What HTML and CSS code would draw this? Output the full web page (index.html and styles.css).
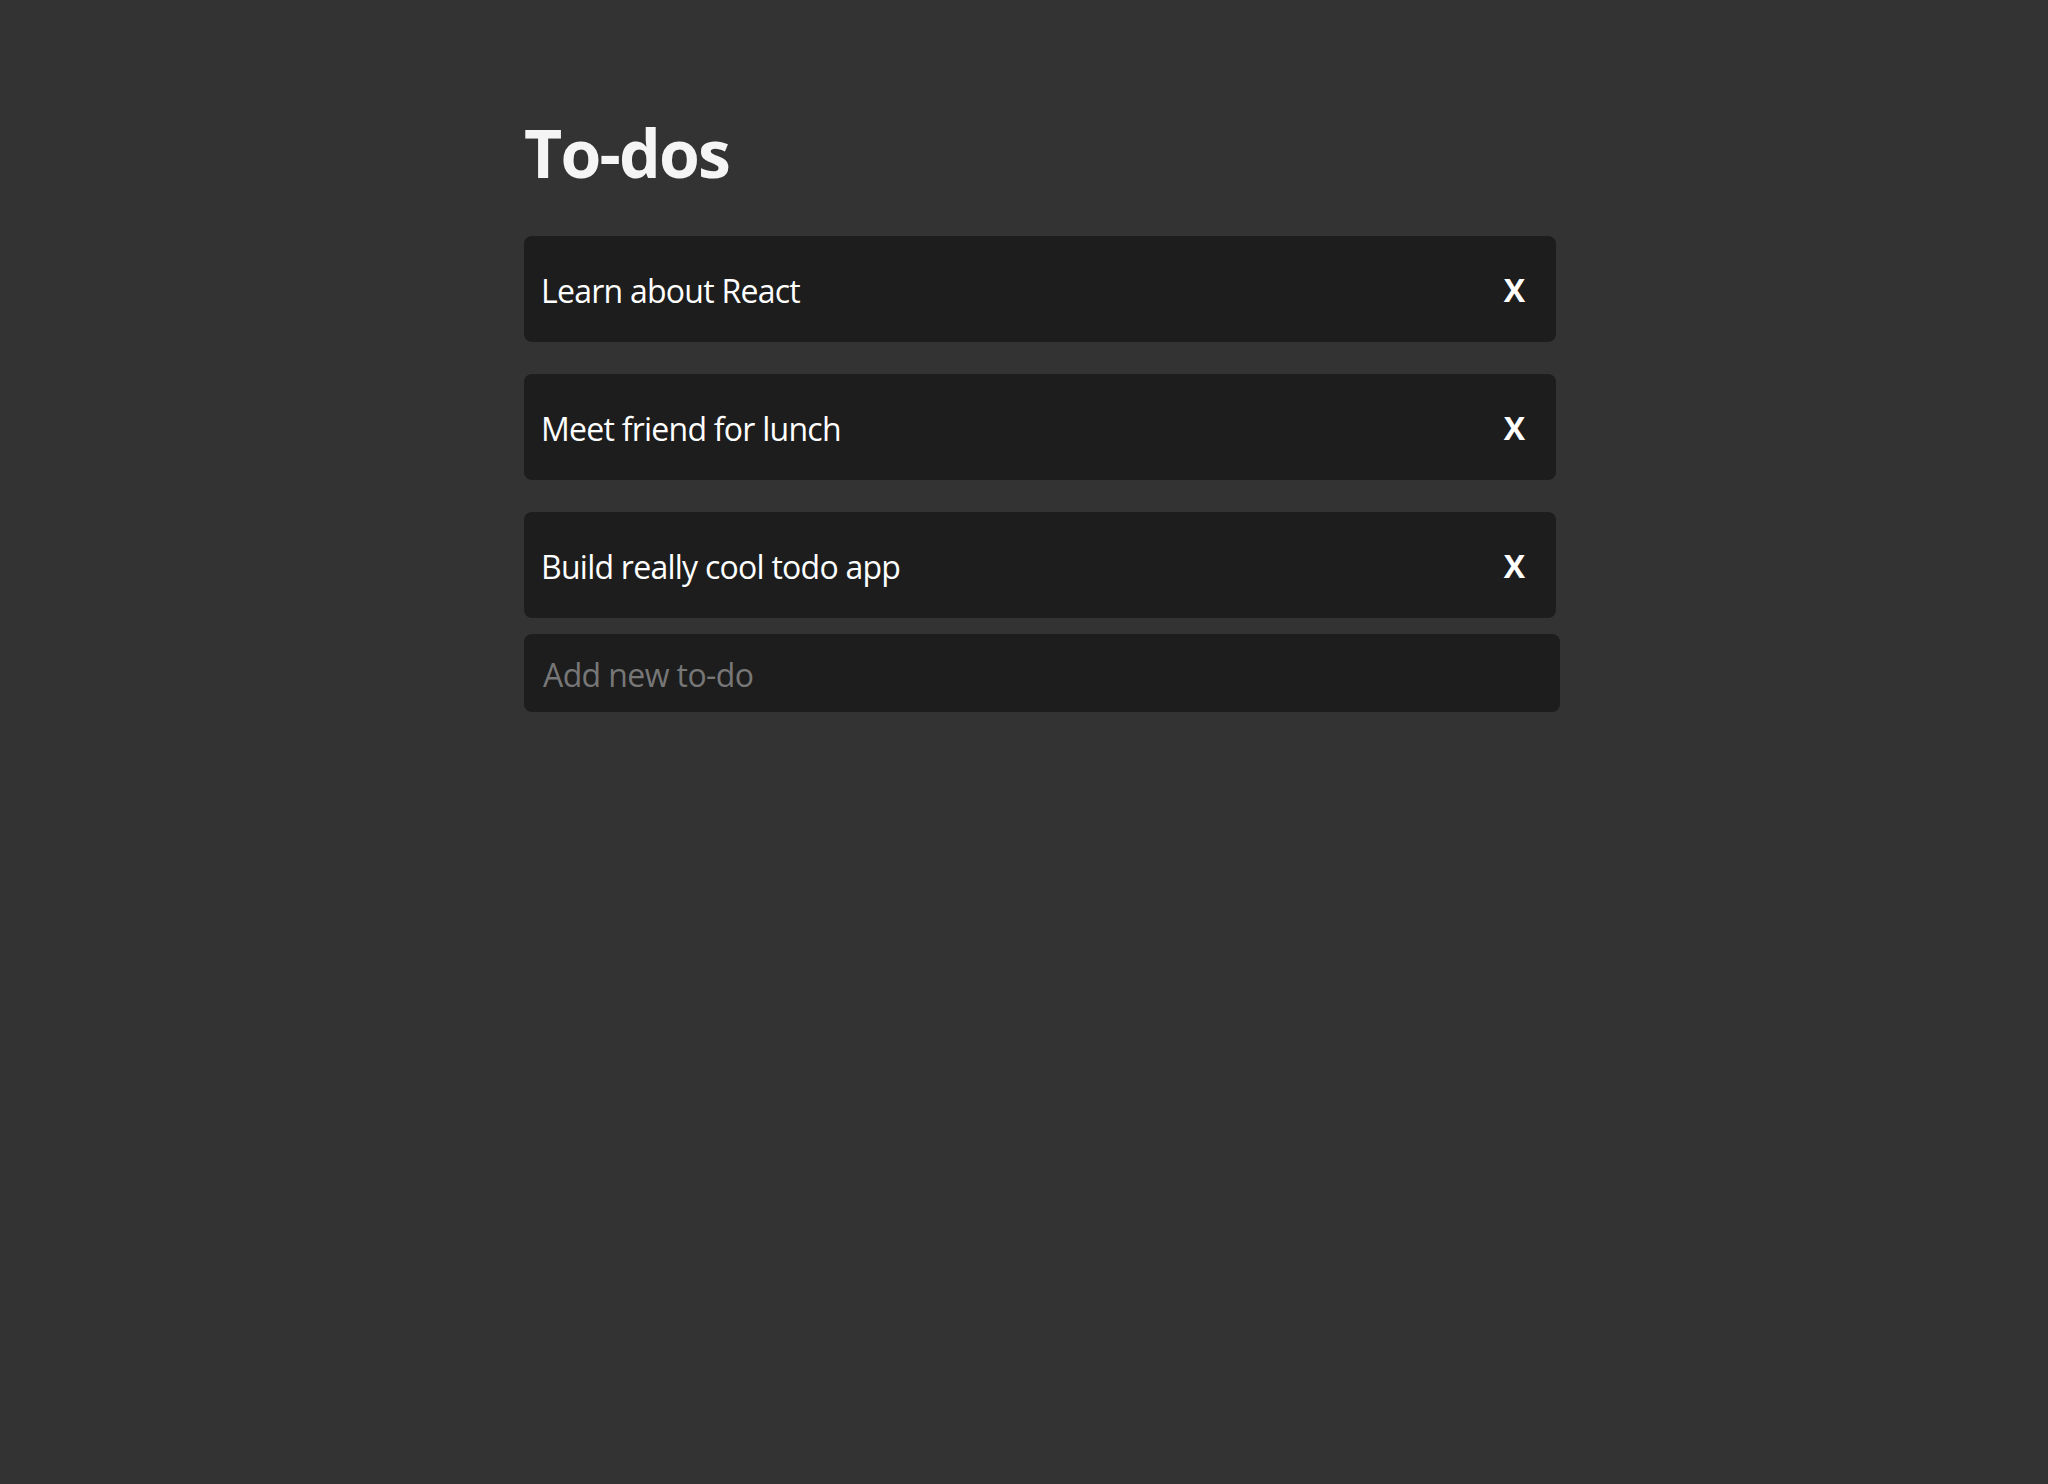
FILE: index.html
```html
<!DOCTYPE html>
<html lang="en">
<head>
<meta charset="utf-8">
<title>To-dos</title>
<link rel="stylesheet" href="styles.css">
</head>
<body>
<main class="app">
  <h1 class="title">To-dos</h1>
  <ul class="list">
    <li class="item"><span class="item-text">Learn about React</span><button class="remove">X</button></li>
    <li class="item"><span class="item-text">Meet friend for lunch</span><button class="remove">X</button></li>
    <li class="item"><span class="item-text">Build really cool todo app</span><button class="remove">X</button></li>
  </ul>
  <input class="new-todo" type="text" placeholder="Add new to-do">
</main>
</body>
</html>
```
FILE: styles.css
```css
html, body {
  margin: 0;
  padding: 0;
  background: #333333;
  height: 100%;
}
body {
  font-family: "Open Sans", "Noto Sans", sans-serif;
  color: #ffffff;
}
.app {
  width: 1036px;
  padding: 108px 0 0 524px;
}
.title {
  margin: 0 0 40px 0;
  font-size: 66px;
  line-height: 88px;
  font-weight: 700;
  letter-spacing: -1.8px;
  color: #f5f5f5;
}
.list {
  list-style: none;
  margin: 0;
  padding: 0;
  width: 1032px;
}
.item {
  display: flex;
  align-items: center;
  justify-content: space-between;
  height: 106px;
  box-sizing: border-box;
  padding: 0 31px 0 17px;
  margin-bottom: 32px;
  background: #1d1d1d;
  border-radius: 8px;
}
.item:last-child {
  margin-bottom: 16px;
}
.item-text {
  font-size: 32px;
  letter-spacing: -0.75px;
  color: #ffffff;
  padding-top: 2px;
}
.remove {
  background: none;
  border: 0;
  padding: 0;
  color: #ffffff;
  font-family: "Open Sans", sans-serif;
  font-weight: 700;
  font-size: 32px;
  cursor: pointer;
}
.new-todo {
  display: block;
  width: 1036px;
  height: 78px;
  box-sizing: border-box;
  padding: 2px 19px 0;
  border: 0;
  border-radius: 8px;
  background: #1d1d1d;
  color: #ffffff;
  font-family: "Open Sans", sans-serif;
  font-size: 32px;
  letter-spacing: -0.6px;
  outline: none;
}
.new-todo::placeholder {
  color: #777777;
}
```
